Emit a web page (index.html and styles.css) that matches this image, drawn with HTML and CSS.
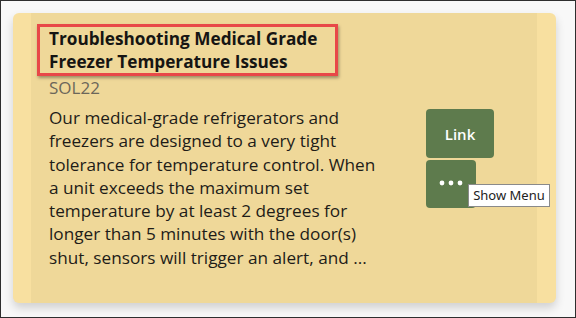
FILE: index.html
```html
<!DOCTYPE html>
<html>
<head>
<meta charset="utf-8">
<link rel="stylesheet" href="styles.css">
</head>
<body>
<div class="frame">
  <div class="card">
    <div class="card-inner">
      <div class="content">
        <div class="title-box">
          <h2 class="title">Troubleshooting Medical Grade Freezer Temperature Issues</h2>
        </div>
        <div class="code">SOL22</div>
        <p class="desc">Our medical-grade refrigerators and freezers are designed to a very tight tolerance for temperature control. When a unit exceeds the maximum set temperature by at least 2 degrees for longer than 5 minutes with the door(s) shut, sensors will trigger an alert, and ...</p>
      </div>
      <div class="actions">
        <button class="btn btn-link">Link</button>
        <div class="menu-wrap">
          <button class="btn btn-menu" aria-label="Show Menu">
            <svg width="24" height="6" viewBox="0 0 24 6"><circle cx="3" cy="3" r="2.4" fill="#fff"/><circle cx="12" cy="3" r="2.4" fill="#fff"/><circle cx="21" cy="3" r="2.4" fill="#fff"/></svg>
          </button>
          <div class="tooltip">Show Menu</div>
        </div>
      </div>
    </div>
  </div>
</div>
</body>
</html>
```

FILE: styles.css
```css
html, body {
  margin: 0;
  padding: 0;
}
body {
  width: 576px;
  height: 318px;
  overflow: hidden;
  font-family: "Open Sans", "Noto Sans", sans-serif;
}
.frame {
  box-sizing: border-box;
  width: 576px;
  height: 318px;
  border: 1px solid #2e2e2e;
  background: #f8f8f8;
  padding: 12px 19px 0 12px;
}
.card {
  display: flex;
  height: 290px;
  background: #f8e0a0;
  border-radius: 6px;
  padding: 0 19px 0 18px;
  box-shadow: 0 5px 10px rgba(0, 0, 0, 0.16);
}
.card-inner {
  flex: 1;
  display: flex;
  background: #efd899;
  padding: 11px 0 0 6px;
}
.content {
  width: 340px;
  flex-shrink: 0;
}
.title-box {
  border: 3px solid #e84848;
  box-shadow: 1px 2px 3px rgba(0, 0, 0, 0.35);
  padding: 0 0 0 9px;
  width: 286px;
}
.title {
  margin: 0;
  font-size: 17.2px;
  font-weight: 700;
  line-height: 23px;
  color: #161513;
}
.code {
  padding-left: 12px;
  font-size: 17px;
  line-height: 23px;
  color: #6c6759;
}
.desc {
  margin: 7px 0 0;
  padding-left: 12px;
  font-size: 17.2px;
  line-height: 23.3px;
  color: #1e1c18;
}
.actions {
  margin: 85px 0 0 49px;
  display: flex;
  flex-direction: column;
  align-items: flex-start;
  gap: 2px;
}
.btn {
  border: none;
  background: #5e7b4d;
  color: #fff;
  border-radius: 4px;
  font-family: "Open Sans", "Noto Sans", sans-serif;
  font-size: 15px;
  font-weight: 600;
  padding: 0;
  display: flex;
  align-items: center;
  justify-content: center;
}
.btn-link {
  width: 68px;
  height: 49px;
}
.menu-wrap {
  position: relative;
}
.btn-menu {
  width: 50px;
  height: 48px;
  padding-bottom: 2px;
}
.tooltip {
  position: absolute;
  left: 42px;
  top: 24px;
  box-sizing: border-box;
  width: 82px;
  height: 23px;
  background: #fff;
  border: 1px solid #8a8a8a;
  font-family: "Noto Sans", "Open Sans", sans-serif;
  font-size: 13px;
  line-height: 21px;
  color: #222;
  text-align: center;
  white-space: nowrap;
}
```
